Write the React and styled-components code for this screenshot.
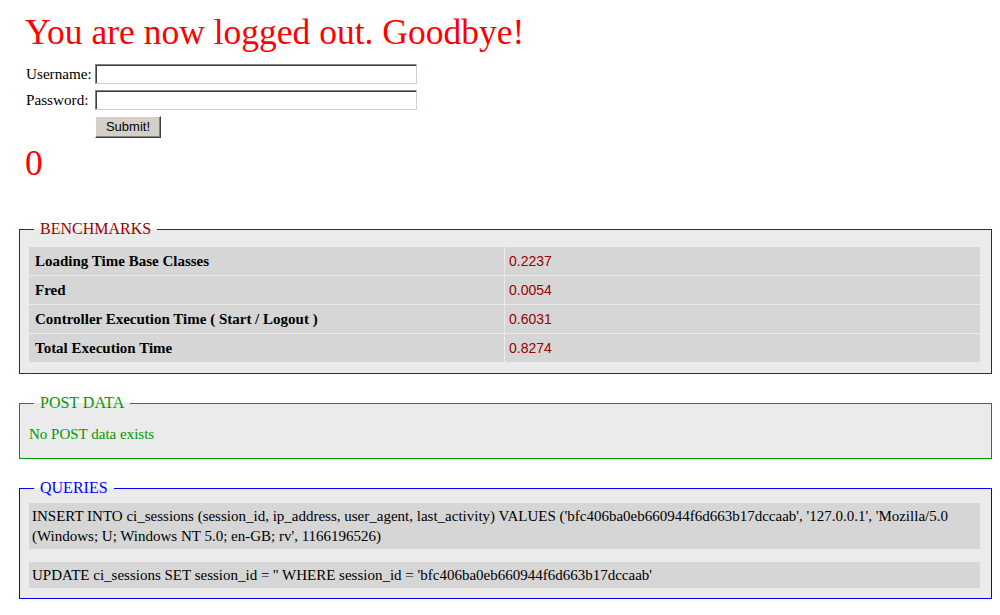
import React from 'react'
import styled, { createGlobalStyle } from 'styled-components'

const GlobalStyle = createGlobalStyle`
  body {
    margin: 0;
    background: #fff;
    font-family: "Liberation Serif", "Times New Roman", serif;
    color: #000;
  }
`

const Page = styled.div`
  padding: 12px 8px 20px 19px;
`

const Login = styled.div`
  padding-left: 6px;
`

const BigRed = styled.h1`
  margin: 0;
  font-size: 35.5px;
  line-height: 40px;
  font-weight: normal;
  color: #ff0000;
`

const LoginForm = styled.form`
  display: grid;
  grid-template-columns: 70px auto;
  grid-template-rows: 20px 20px 22px;
  row-gap: 6px;
  margin: 12px 0 0;
  justify-items: start;
  align-items: center;
`

const Label = styled.label`
  padding-left: 1px;
  font-size: 15.2px;
  line-height: 18px;
  white-space: nowrap;
`

const TextInput = styled.input`
  box-sizing: border-box;
  width: 322px;
  height: 20px;
  margin: 0;
  padding: 1px 3px;
  border: 1px solid;
  border-color: #808080 #d4d0c8 #d4d0c8 #808080;
  box-shadow: inset 1px 1px 0 #404040;
  background: #fff;
  outline: none;
`

const SubmitButton = styled.button`
  grid-column: 2;
  box-sizing: border-box;
  width: 66px;
  height: 22px;
  margin: -1px 0 0;
  padding: 0;
  font-family: "Liberation Sans", Arial, sans-serif;
  font-size: 13px;
  color: #000;
  background: #d4d0c8;
  border: 1px solid;
  border-color: #fff #404040 #404040 #fff;
  box-shadow: inset -1px -1px 0 #808080;
`

const Zero = styled(BigRed)`
  margin-top: 5px;
`

const Panel = styled.fieldset`
  margin: ${p => (p.$first ? '37px' : '20px')} 0 0;
  padding: ${p => p.$top}px 11px ${p => p.$bottom}px 9px;
  border: 1px solid ${p => p.$color};
  background: #ebebeb;
  min-width: 0;
`

const Legend = styled.legend`
  margin-left: 5px;
  padding: 0 6px;
  font-size: 16px;
  line-height: 18px;
  color: ${p => p.$color};
`

const BenchTable = styled.div`
  display: grid;
  grid-template-columns: 1fr 1fr;
  gap: 1px;
`

const BenchLabel = styled.div`
  background: #d6d6d6;
  padding: 0 6px;
  line-height: 28px;
  font-size: 15px;
  font-weight: bold;
  white-space: nowrap;
`

const BenchValue = styled.div`
  background: #d6d6d6;
  padding: 0 4px;
  line-height: 28px;
  font-family: "Liberation Sans", Arial, sans-serif;
  font-size: 14px;
  color: #990000;
`

const NoData = styled.div`
  padding: 4px 0 5px;
  font-size: 15px;
  line-height: 18px;
  color: #009900;
`

const QueryList = styled.div`
  display: flex;
  flex-direction: column;
  gap: 13px;
`

const QueryRow = styled.div`
  background: #d6d6d6;
  padding: 3px;
  font-size: 15px;
  line-height: 20px;
  color: #000;
`

const benchmarks = [
  ['Loading Time Base Classes', '0.2237'],
  ['Fred', '0.0054'],
  ['Controller Execution Time ( Start / Logout )', '0.6031'],
  ['Total Execution Time', '0.8274'],
]

const queries = [
  "INSERT INTO ci_sessions (session_id, ip_address, user_agent, last_activity) VALUES ('bfc406ba0eb660944f6d663b17dccaab', '127.0.0.1', 'Mozilla/5.0 (Windows; U; Windows NT 5.0; en-GB; rv', 1166196526)",
  "UPDATE ci_sessions SET session_id = '' WHERE session_id = 'bfc406ba0eb660944f6d663b17dccaab'",
]

export default function App() {
  return (
    <Page>
      <GlobalStyle />
      <Login>
        <BigRed>You are now logged out. Goodbye!</BigRed>
        <LoginForm onSubmit={e => e.preventDefault()}>
          <Label htmlFor="username">Username:</Label>
          <TextInput id="username" type="text" />
          <Label htmlFor="password">Password:</Label>
          <TextInput id="password" type="password" />
          <SubmitButton type="submit">Submit!</SubmitButton>
        </LoginForm>
        <Zero as="div">0</Zero>
      </Login>

      <Panel $first $top={9} $bottom={11} $color="#990000">
        <Legend $color="#990000">BENCHMARKS</Legend>
        <BenchTable>
          {benchmarks.map(([name, time]) => (
            <React.Fragment key={name}>
              <BenchLabel>{name}</BenchLabel>
              <BenchValue>{time}</BenchValue>
            </React.Fragment>
          ))}
        </BenchTable>
      </Panel>

      <Panel $top={9} $bottom={10} $color="#009900">
        <Legend $color="#009900">POST DATA</Legend>
        <NoData>No POST data exists</NoData>
      </Panel>

      <Panel $top={6} $bottom={10} $color="#0000ff">
        <Legend $color="#0000ff">QUERIES</Legend>
        <QueryList>
          {queries.map(q => (
            <QueryRow key={q}>{q}</QueryRow>
          ))}
        </QueryList>
      </Panel>
    </Page>
  )
}
